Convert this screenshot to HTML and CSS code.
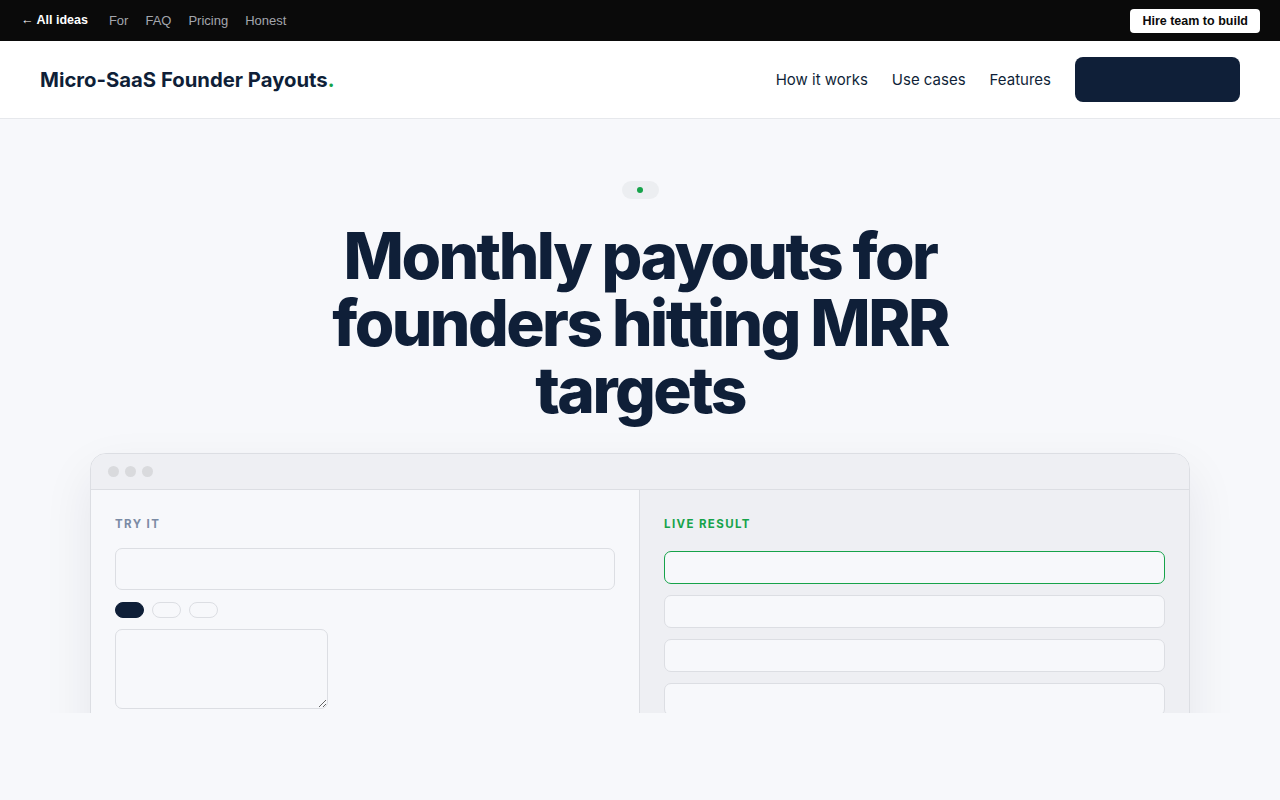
FILE: index.html
```html
<!DOCTYPE html>
<html lang="en">
<head>
  <meta charset="UTF-8">
  <title>Micro-SaaS Founder Payouts</title>
  <link rel="stylesheet" href="styles.css">
</head>
<body>
  <div class="topbar">
    <div class="topbar-links">
      <a href="#" class="back">&larr; All ideas</a>
      <a href="#">For</a>
      <a href="#">FAQ</a>
      <a href="#">Pricing</a>
      <a href="#">Honest</a>
    </div>
    <a href="#" class="hire">Hire team to build</a>
  </div>

  <header class="nav">
    <a href="#" class="logo">Micro-SaaS Founder Payouts<span class="dot">.</span></a>
    <nav class="nav-links">
      <a href="#">How it works</a>
      <a href="#">Use cases</a>
      <a href="#">Features</a>
      <a href="#" class="nav-cta"></a>
    </nav>
  </header>

  <section class="hero">
    <div class="badge"><span class="badge-dot"></span></div>
    <h1>Monthly payouts for founders hitting MRR targets</h1>

    <div class="window">
      <div class="window-bar">
        <span></span><span></span><span></span>
      </div>
      <div class="window-body">
        <div class="pane">
          <div class="pane-label">Try it</div>
          <div class="field"></div>
          <div class="chips">
            <span class="chip active"></span>
            <span class="chip"></span>
            <span class="chip"></span>
          </div>
          <textarea class="notes"></textarea>
        </div>
        <div class="pane result">
          <div class="pane-label green">Live result</div>
          <div class="row highlight"></div>
          <div class="row"></div>
          <div class="row"></div>
          <div class="row"></div>
        </div>
      </div>
    </div>
  </section>
</body>
</html>
```

FILE: styles.css
```css
body {
  margin: 0;
  background-color: #f7f8fb;
  font-family: Inter, "Noto Sans", sans-serif;
  color: #0f1f38;
}
a {
  text-decoration: none;
}
.topbar {
  background-color: #0a0a0a;
  height: 41px;
  display: flex;
  align-items: center;
  justify-content: space-between;
  padding: 0 20px 0 21px;
  font-family: "Liberation Sans", Arial, sans-serif;
  font-size: 13px;
}
.topbar-links {
  display: flex;
  gap: 17px;
}
.topbar-links a {
  color: #a3a6ad;
}
.topbar-links .back {
  color: #fff;
  font-weight: bold;
  font-size: 12.5px;
  margin-right: 4px;
}
.hire {
  background-color: #fff;
  color: #0a0a0a;
  font-weight: bold;
  font-size: 12.5px;
  padding: 5px 12px;
  border-radius: 4px;
}
.nav {
  background-color: #fff;
  height: 77px;
  border-bottom: 1px solid #e6e8ec;
  display: flex;
  align-items: center;
  justify-content: space-between;
  padding: 0 40px;
}
.logo {
  color: #0f1f38;
  font-size: 20.3px;
  font-weight: 700;
}
.logo .dot {
  color: #16a34a;
}
.nav-links {
  display: flex;
  align-items: center;
  gap: 24px;
}
.nav-links a {
  color: #0f1f38;
  font-size: 15px;
  line-height: 1;
}
.nav-links .nav-cta {
  display: block;
  width: 165px;
  height: 45px;
  background-color: #0f1f38;
  border-radius: 8px;
}
.hero {
  height: 594px;
  overflow: hidden;
  display: flex;
  flex-direction: column;
  align-items: center;
  padding-top: 62px;
  box-sizing: border-box;
}
.badge {
  flex-shrink: 0;
  width: 37px;
  height: 18px;
  border-radius: 9px;
  background-color: #eceef1;
  display: flex;
  align-items: center;
  justify-content: center;
}
.badge-dot {
  width: 6px;
  height: 6px;
  border-radius: 50%;
  background-color: #16a34a;
}
h1 {
  max-width: 660px;
  margin: 23px 0 0;
  text-align: center;
  font-size: 64px;
  line-height: 67px;
  font-weight: 800;
  letter-spacing: -0.04em;
  color: #0f1f38;
}
.window {
  flex-shrink: 0;
  width: 1100px;
  box-sizing: border-box;
  margin-top: 30px;
  border: 1px solid #dcdee3;
  border-radius: 16px;
  overflow: hidden;
  background-color: #f7f8fb;
  box-shadow: 0 20px 50px rgba(15, 31, 56, 0.08);
}
.window-bar {
  height: 35px;
  background-color: #eeeff3;
  border-bottom: 1px solid #dcdee3;
  display: flex;
  align-items: center;
  gap: 6px;
  padding-left: 17px;
}
.window-bar span {
  width: 11px;
  height: 11px;
  border-radius: 50%;
  background-color: #d9dadd;
}
.window-body {
  display: grid;
  grid-template-columns: 548px 1fr;
  min-height: 400px;
}
.pane {
  padding: 27px 24px 24px;
}
.pane.result {
  background-color: #eeeff3;
  border-left: 1px solid #dcdee3;
}
.pane-label {
  font-size: 11.5px;
  font-weight: 700;
  letter-spacing: 0.12em;
  text-transform: uppercase;
  color: #7b8ba5;
  margin-bottom: 17px;
}
.pane-label.green {
  color: #16a34a;
  margin-bottom: 20px;
}
.field {
  height: 40px;
  border: 1px solid #dcdee3;
  border-radius: 7px;
  background-color: #f7f8fb;
}
.chips {
  display: flex;
  gap: 8px;
  margin-top: 12px;
}
.chip {
  width: 27px;
  height: 14px;
  border: 1px solid #dcdee3;
  border-radius: 8px;
}
.chip.active {
  background-color: #0f1f38;
  border-color: #0f1f38;
}
.notes {
  display: block;
  margin-top: 11px;
  width: 213px;
  height: 80px;
  box-sizing: border-box;
  border: 1px solid #dcdee3;
  border-radius: 7px;
  background-color: #f7f8fb;
}
.row {
  height: 31px;
  border: 1px solid #dcdee3;
  border-radius: 7px;
  background-color: #f7f8fb;
  margin-bottom: 11px;
}
.row.highlight {
  border-color: #16a34a;
}
```
